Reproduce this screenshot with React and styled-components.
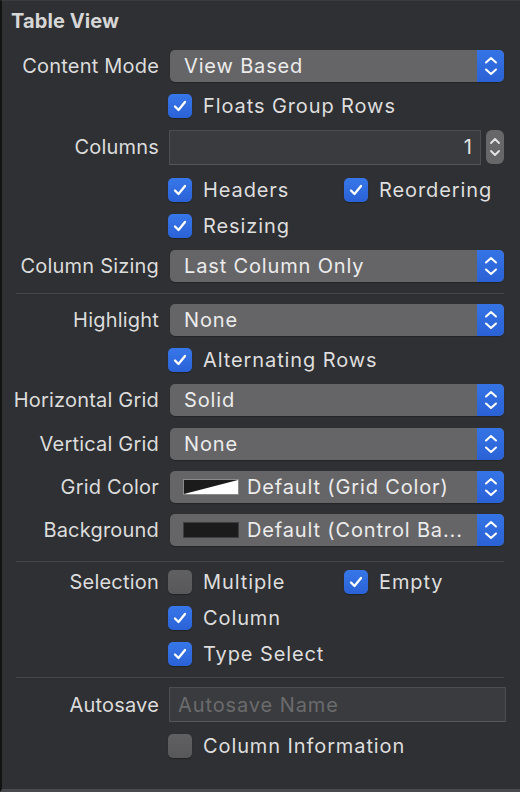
import React from "react"
import styled, { createGlobalStyle } from "styled-components"

const GlobalStyle = createGlobalStyle`
  html, body {
    margin: 0;
    padding: 0;
    background: #2f3033;
  }
  body {
    font-family: "Inter", "Liberation Sans", sans-serif;
    -webkit-font-smoothing: antialiased;
  }
`

const Panel = styled.div`
  width: 520px;
  height: 792px;
  box-sizing: border-box;
  background: #2f3033;
  border-left: 2px solid #121213;
  border-top: 1px solid #3a3b3e;
  border-bottom: 3px solid #48494c;
  display: flex;
  flex-direction: column;
  color: #dedede;
  overflow: hidden;
`

const Title = styled.div`
  height: 39px;
  display: flex;
  align-items: center;
  padding-left: 9px;
  font-size: 20px;
  font-weight: 700;
  letter-spacing: 0.1px;
  color: #d6d6d6;
`

const Row = styled.div`
  height: ${(p) => p.$h}px;
  display: grid;
  grid-template-columns: 157px 1fr;
  column-gap: 10px;
  align-items: center;
  padding-right: 16px;
  flex-shrink: 0;
`

const Label = styled.div`
  text-align: right;
  font-size: 20px;
  letter-spacing: 0.2px;
  color: #dcdcdc;
  white-space: nowrap;
`

const Separator = styled.div`
  height: 1px;
  background: #45464a;
  margin: ${(p) => p.$before}px 16px 0 14px;
  flex-shrink: 0;
`

const Popup = styled.div`
  height: 32px;
  margin-left: 1px;
  display: flex;
  align-items: stretch;
  border-radius: 5px;
  overflow: hidden;
  background: #656567;
  box-shadow: 0 1px 1px rgba(0, 0, 0, 0.25);
`

const PopupValue = styled.div`
  flex: 1;
  display: flex;
  align-items: center;
  gap: 8px;
  padding-left: 14px;
  font-size: 20px;
  letter-spacing: 0.85px;
  color: #ececec;
  white-space: nowrap;
  overflow: hidden;
`

const PopupArrows = styled.div`
  width: 27px;
  display: flex;
  align-items: center;
  justify-content: center;
  background: linear-gradient(#3574e6, #2a62d6);
`

const Swatch = styled.div`
  width: 56px;
  height: 16px;
  margin-left: -1px;
  flex-shrink: 0;
  box-sizing: border-box;
  border: 1px solid ${(p) => (p.$light ? "#8a8a8a" : "#3e3e3e")};
  background: #1b1b1b;
  display: flex;
`

const CheckList = styled.div`
  display: grid;
  grid-template-columns: ${(p) => (p.$two ? "176px 1fr" : "1fr")};
  align-items: center;
  margin-left: -1px;
`

const CheckItem = styled.label`
  display: flex;
  align-items: center;
  gap: 11px;
  font-size: 20px;
  letter-spacing: 0.9px;
  color: #dedede;
  white-space: nowrap;
`

const Box = styled.span`
  width: 24px;
  height: 24px;
  box-sizing: border-box;
  border-radius: 5px;
  display: flex;
  align-items: center;
  justify-content: center;
  flex-shrink: 0;
  background: ${(p) =>
    p.$on ? "linear-gradient(#3777ea, #2a62d6)" : "linear-gradient(#606063, #58585b)"};
  box-shadow: 0 1px 1px rgba(0, 0, 0, 0.3);
`

const FieldWrap = styled.div`
  display: flex;
  align-items: center;
  gap: 5px;
`

const Field = styled.div`
  flex: 1;
  height: 35px;
  box-sizing: border-box;
  margin-right: ${(p) => (p.$placeholder ? "-2px" : "0")};
  border: 1px solid #4c4d50;
  border-bottom-color: #55565a;
  background: #3a3b3e;
  display: flex;
  align-items: center;
  justify-content: ${(p) => (p.$right ? "flex-end" : "flex-start")};
  padding: 0 8px 0 8px;
  font-size: 20px;
  letter-spacing: ${(p) => (p.$placeholder ? "0.9px" : "0")};
  color: ${(p) => (p.$placeholder ? "#6b6b6d" : "#e2e2e2")};
`

const Stepper = styled.div`
  width: 18px;
  height: 34px;
  border-radius: 6px;
  background: #676769;
  display: flex;
  align-items: center;
  justify-content: center;
`

function Chevrons({ small }) {
  if (small) {
    return (
      <svg width="12" height="24" viewBox="0 0 12 24">
        <polyline points="2,8 6,4 10,8" fill="none" stroke="#e6e6e6" strokeWidth="1.8" strokeLinecap="round" strokeLinejoin="round" />
        <polyline points="2,16 6,20 10,16" fill="none" stroke="#e6e6e6" strokeWidth="1.8" strokeLinecap="round" strokeLinejoin="round" />
      </svg>
    )
  }
  return (
    <svg width="14" height="20" viewBox="0 0 14 20">
      <polyline points="2,6.5 7,2 12,6.5" fill="none" stroke="#fff" strokeWidth="2" strokeLinecap="round" strokeLinejoin="round" />
      <polyline points="2,13.5 7,18 12,13.5" fill="none" stroke="#fff" strokeWidth="2" strokeLinecap="round" strokeLinejoin="round" />
    </svg>
  )
}

function Check({ on, children }) {
  return (
    <CheckItem>
      <Box $on={on}>
        {on && (
          <svg width="16" height="16" viewBox="0 0 16 16">
            <polyline points="3,8.5 6.5,12 13,4" fill="none" stroke="#fff" strokeWidth="2.3" strokeLinecap="round" strokeLinejoin="round" />
          </svg>
        )}
      </Box>
      {children}
    </CheckItem>
  )
}

function Select({ value, swatch }) {
  return (
    <Popup>
      <PopupValue>
        {swatch === "grid" && (
          <Swatch $light>
            <svg width="54" height="14" viewBox="0 0 54 14" preserveAspectRatio="none">
              <polygon points="0,14 54,14 54,0" fill="#fff" />
            </svg>
          </Swatch>
        )}
        {swatch === "dark" && <Swatch />}
        <span>{value}</span>
      </PopupValue>
      <PopupArrows>
        <Chevrons />
      </PopupArrows>
    </Popup>
  )
}

export default function App() {
  return (
    <>
      <GlobalStyle />
      <Panel>
        <Title>Table View</Title>

        <Row $h={52}>
          <Label>Content Mode</Label>
          <Select value="View Based" />
        </Row>
        <Row $h={28}>
          <span />
          <CheckList>
            <Check on>Floats Group Rows</Check>
          </CheckList>
        </Row>
        <Row $h={54}>
          <Label>Columns</Label>
          <FieldWrap>
            <Field $right>1</Field>
            <Stepper>
              <Chevrons small />
            </Stepper>
          </FieldWrap>
        </Row>
        <Row $h={32}>
          <span />
          <CheckList $two>
            <Check on>Headers</Check>
            <Check on>Reordering</Check>
          </CheckList>
        </Row>
        <Row $h={40}>
          <span />
          <CheckList>
            <Check on>Resizing</Check>
          </CheckList>
        </Row>
        <Row $h={40}>
          <Label>Column Sizing</Label>
          <Select value="Last Column Only" />
        </Row>

        <Separator $before={7} />

        <Row $h={52}>
          <Label>Highlight</Label>
          <Select value="None" />
        </Row>
        <Row $h={28}>
          <span />
          <CheckList>
            <Check on>Alternating Rows</Check>
          </CheckList>
        </Row>
        <Row $h={52}>
          <Label>Horizontal Grid</Label>
          <Select value="Solid" />
        </Row>
        <Row $h={36}>
          <Label>Vertical Grid</Label>
          <Select value="None" />
        </Row>
        <Row $h={50}>
          <Label>Grid Color</Label>
          <Select value="Default (Grid Color)" swatch="grid" />
        </Row>
        <Row $h={36}>
          <Label>Background</Label>
          <Select value="Default (Control Ba..." swatch="dark" />
        </Row>

        <Separator $before={13} />

        <Row $h={40}>
          <Label>Selection</Label>
          <CheckList $two>
            <Check>Multiple</Check>
            <Check on>Empty</Check>
          </CheckList>
        </Row>
        <Row $h={32}>
          <span />
          <CheckList>
            <Check on>Column</Check>
          </CheckList>
        </Row>
        <Row $h={40}>
          <span />
          <CheckList>
            <Check on>Type Select</Check>
          </CheckList>
        </Row>

        <Separator $before={3} />

        <Row $h={53}>
          <Label>Autosave</Label>
          <Field $placeholder>Autosave Name</Field>
        </Row>
        <Row $h={30}>
          <span />
          <CheckList>
            <Check>Column Information</Check>
          </CheckList>
        </Row>
      </Panel>
    </>
  )
}
